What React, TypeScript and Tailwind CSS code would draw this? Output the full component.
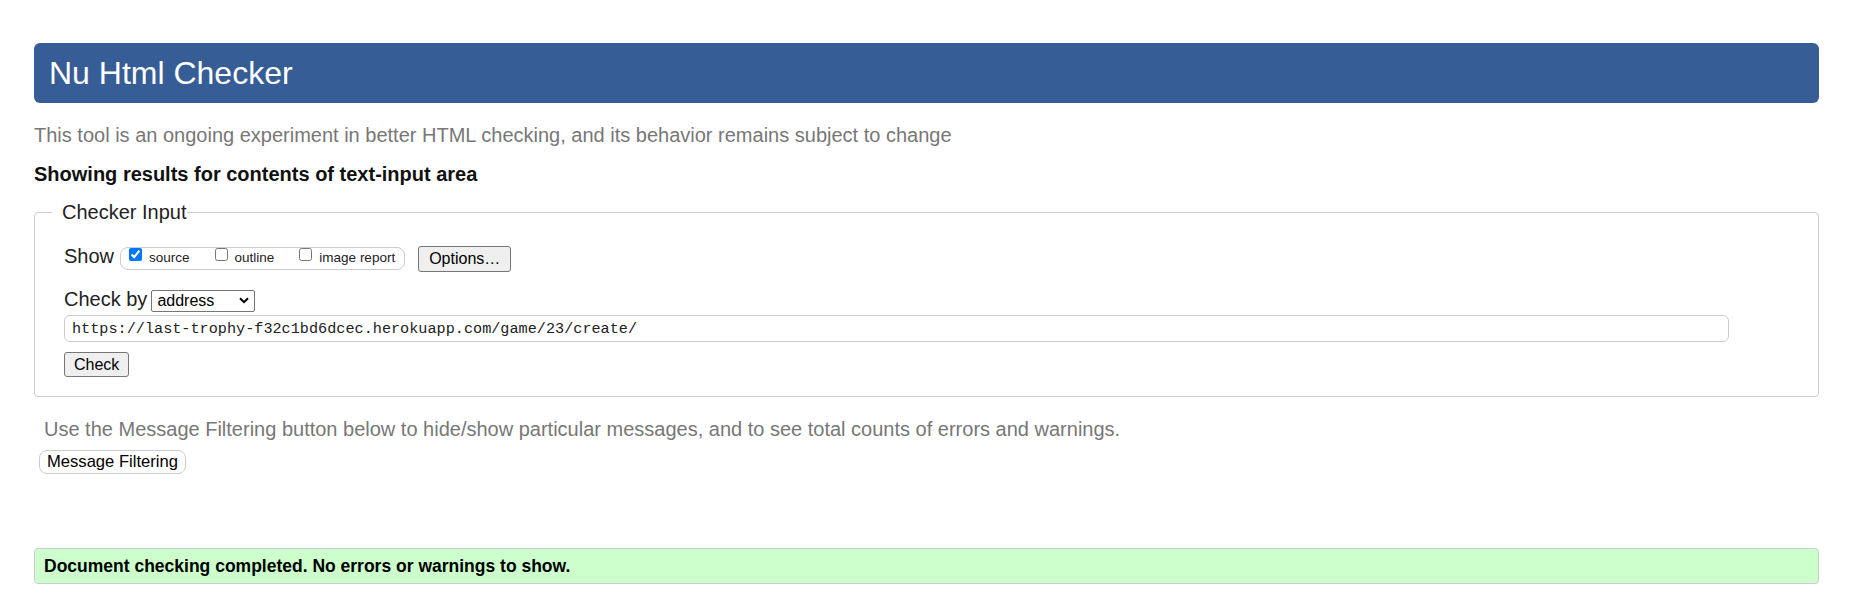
import { useState } from 'react';

function ShowOption({ label, checked, onToggle, first }: { label: string; checked: boolean; onToggle: () => void; first?: boolean }) {
  return (
    <label className={`flex items-start ${first ? '' : 'ml-[25px]'}`}>
      <input type="checkbox" className="m-0 h-[13px] w-[13px]" checked={checked} onChange={onToggle} />
      <span className="ml-[7px] mt-[2px] text-[13.5px] leading-[16px] text-[#222]">{label}</span>
    </label>
  );
}

export default function App() {
  const [show, setShow] = useState({ source: true, outline: false, image: false });
  const [checkBy, setCheckBy] = useState('address');
  const [url, setUrl] = useState('https://last-trophy-f32c1bd6dcec.herokuapp.com/game/23/create/');

  return (
    <div className="min-h-screen bg-white px-[34px] pt-[43px] font-['Liberation_Sans',Arial,sans-serif] text-[#222]">
      <h1 className="flex h-[60px] items-center rounded-[6px] bg-[#365d95] px-[15px] text-[32px] font-normal leading-none text-white">
        Nu Html Checker
      </h1>
      <p className="mt-[21px] text-[20px] leading-[23px] text-[#777]">
        This tool is an ongoing experiment in better HTML checking, and its behavior remains subject to change
      </p>
      <p className="mt-[16px] text-[20px] font-bold leading-[23px] text-[#111]">
        Showing results for contents of text-input area
      </p>

      <fieldset className="mt-[15px] rounded-[4px] border border-[#ccc] px-[29px] pb-[19px]">
        <legend className="ml-[-12px] pl-[10px] text-[20px] leading-[23px] text-[#222]">Checker Input</legend>

        <div className="mt-[21px] flex items-start">
          <span className="text-[20px] leading-[23px]">Show</span>
          <div className="ml-[6px] mt-[2px] flex h-[23px] items-start rounded-[8px] border border-[#ccc] pl-[8px] pr-[9px]">
            <ShowOption first label="source" checked={show.source} onToggle={() => setShow((s) => ({ ...s, source: !s.source }))} />
            <ShowOption label="outline" checked={show.outline} onToggle={() => setShow((s) => ({ ...s, outline: !s.outline }))} />
            <ShowOption label="image report" checked={show.image} onToggle={() => setShow((s) => ({ ...s, image: !s.image }))} />
          </div>
          <button
            type="button"
            className="ml-[13px] mt-[1px] h-[26px] rounded-[3px] border border-[#767676] bg-[#efefef] px-[10px] text-[16px] leading-[18px] text-black"
          >
            Options…
          </button>
        </div>

        <div className="mt-[16px] flex items-start">
          <span className="text-[20px] leading-[23px]">Check by</span>
          <div className="relative ml-[4px] mt-[1px]">
            <select
              className="h-[22px] w-[104px] appearance-none rounded-[2px] border border-[#767676] bg-white pl-[5px] text-[16px] leading-[18px] text-black"
              value={checkBy}
              onChange={(e) => setCheckBy(e.target.value)}
            >
              <option value="address">address</option>
              <option value="file">file upload</option>
              <option value="text">text input</option>
            </select>
            <svg className="pointer-events-none absolute right-[6px] top-[8px]" width="10" height="7" viewBox="0 0 10 7">
              <path d="M1 1.2 L5 5.2 L9 1.2" fill="none" stroke="#000" strokeWidth="2" />
            </svg>
          </div>
        </div>

        <input
          className="mt-[2px] block h-[27px] w-[1665px] rounded-[6px] border border-[#ccc] px-[7px] font-['Liberation_Mono','DejaVu_Sans_Mono',monospace] text-[15.2px] text-[#222] outline-none"
          value={url}
          onChange={(e) => setUrl(e.target.value)}
        />

        <button
          type="button"
          className="mt-[10px] block h-[25px] rounded-[3px] border border-[#767676] bg-[#efefef] px-[9px] text-[16px] leading-[18px] text-black"
        >
          Check
        </button>
      </fieldset>

      <p className="ml-[10px] mt-[21px] text-[20px] leading-[23px] text-[#777]">
        Use the Message Filtering button below to hide/show particular messages, and to see total counts of errors and warnings.
      </p>
      <button
        type="button"
        className="ml-[5px] mt-[9px] block h-[24px] rounded-[8px] border border-[#ccc] bg-white px-[7px] text-[16.6px] leading-[18px] text-black"
      >
        Message Filtering
      </button>

      <div className="mt-[74px] flex h-[36px] items-center rounded-[4px] border border-[#ccc] bg-[#ccffcc] pl-[9px] text-[17.5px] font-bold text-black">
        Document checking completed. No errors or warnings to show.
      </div>
    </div>
  );
}
